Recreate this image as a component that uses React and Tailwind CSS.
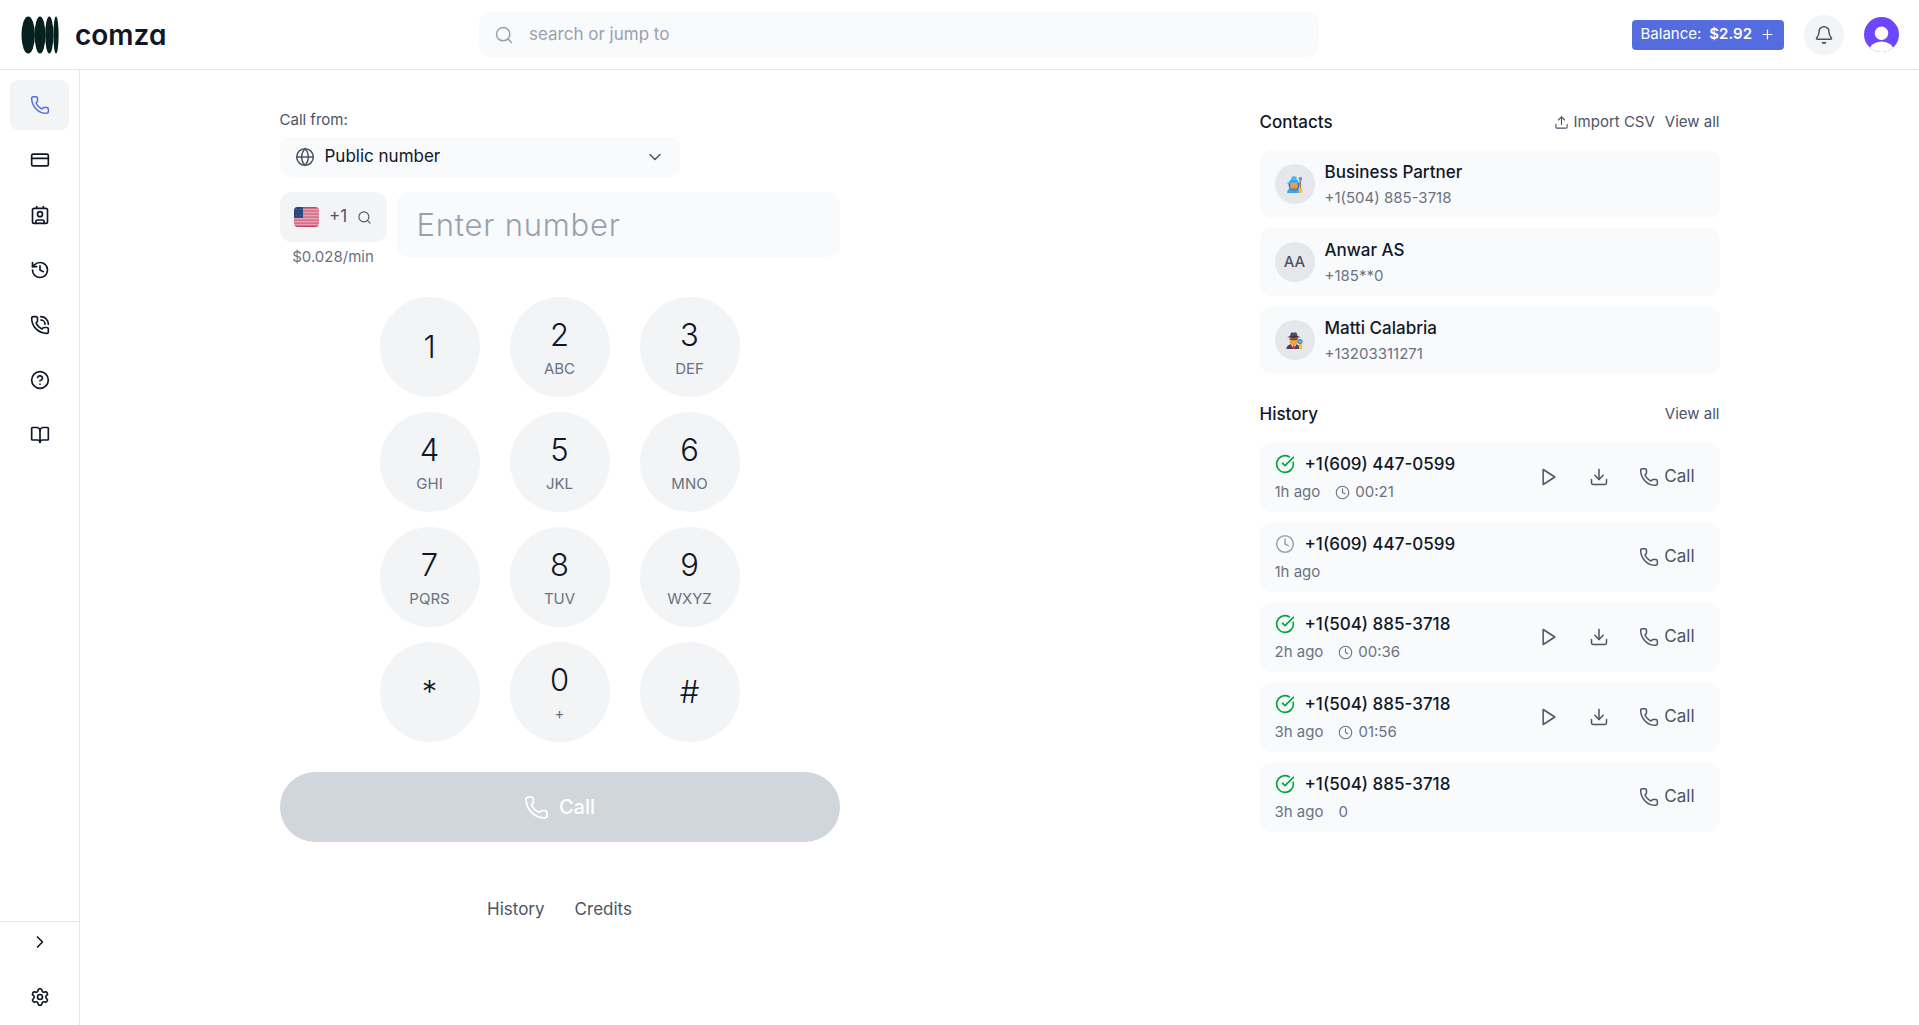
import React, { useState } from 'react';
import {
  Bell,
  BookOpen,
  ChevronDown,
  ChevronRight,
  CircleCheckBig,
  CircleHelp,
  Clock,
  Contact,
  CreditCard,
  Download,
  Globe,
  History,
  Phone,
  PhoneCall,
  Plus,
  Search,
  Settings,
  Upload,
} from 'lucide-react';

const menu = [
  { id: 'dialer', label: 'Dialer', icon: Phone },
  { id: 'credits', label: 'Credits', icon: CreditCard },
  { id: 'contacts', label: 'Contacts', icon: Contact },
  { id: 'history', label: 'History', icon: History },
  { id: 'numbers', label: 'Numbers', icon: PhoneCall },
  { id: 'help', label: 'Help', icon: CircleHelp },
  { id: 'docs', label: 'Docs', icon: BookOpen },
];

const keys = [
  { digit: '1' },
  { digit: '2', letters: 'ABC' },
  { digit: '3', letters: 'DEF' },
  { digit: '4', letters: 'GHI' },
  { digit: '5', letters: 'JKL' },
  { digit: '6', letters: 'MNO' },
  { digit: '7', letters: 'PQRS' },
  { digit: '8', letters: 'TUV' },
  { digit: '9', letters: 'WXYZ' },
  { digit: '*' },
  { digit: '0', letters: '+' },
  { digit: '#' },
];

const contacts = [
  { name: 'Business Partner', phone: '+1(504) 885-3718', avatar: <MageFace /> },
  { name: 'Anwar AS', phone: '+185**0', avatar: 'AA' },
  { name: 'Matti Calabria', phone: '+13203311271', avatar: <DetectiveFace /> },
];

const calls = [
  { id: 1, phone: '+1(609) 447-0599', ago: '1h ago', duration: '00:21', done: true },
  { id: 2, phone: '+1(609) 447-0599', ago: '1h ago', done: false },
  { id: 3, phone: '+1(504) 885-3718', ago: '2h ago', duration: '00:36', done: true },
  { id: 4, phone: '+1(504) 885-3718', ago: '3h ago', duration: '01:56', done: true },
  { id: 5, phone: '+1(504) 885-3718', ago: '3h ago', note: '0', done: true },
];

function LogoMark() {
  return (
    <svg width="40" height="40" viewBox="0 0 40 40" fill="#06201d" aria-hidden="true">
      <ellipse cx="8.2" cy="20" rx="6.7" ry="18.6" />
      <ellipse cx="20" cy="20" rx="5.4" ry="18.6" />
      <ellipse cx="29.3" cy="20" rx="4.1" ry="18.6" />
      <ellipse cx="36" cy="20" rx="2.6" ry="18.6" />
    </svg>
  );
}

function UserAvatar() {
  return (
    <svg width="35" height="35" viewBox="0 0 35 35" aria-hidden="true">
      <defs>
        <clipPath id="avatar-clip">
          <circle cx="17.5" cy="17.5" r="17.5" />
        </clipPath>
      </defs>
      <g clipPath="url(#avatar-clip)">
        <rect width="35" height="35" fill="#6c47ff" />
        <circle cx="17.5" cy="16.3" r="6.7" fill="#fff" />
        <ellipse cx="17.5" cy="34" rx="12.3" ry="9.5" fill="#fff" />
      </g>
    </svg>
  );
}

function UsFlag() {
  return (
    <svg width="25" height="20" viewBox="0 0 25 20" className="rounded" aria-hidden="true">
      <rect width="25" height="20" fill="#e2a3b4" />
      <g fill="#d5708b">
        <rect width="25" height="1.6" fill="#c94466" />
        <rect y="3.1" width="25" height="1.6" />
        <rect y="6.2" width="25" height="1.6" />
        <rect y="9.3" width="25" height="1.6" />
        <rect y="12.4" width="25" height="1.6" />
        <rect y="15.4" width="25" height="1.6" />
        <rect y="18.4" width="25" height="1.6" fill="#c94466" />
      </g>
      <rect width="9" height="10.9" fill="#29487c" />
      <g fill="#56719c">
        <circle cx="2.4" cy="2.6" r=".6" />
        <circle cx="6.4" cy="2.6" r=".6" />
        <circle cx="4.4" cy="5.4" r=".6" />
        <circle cx="2.4" cy="8.2" r=".6" />
        <circle cx="6.4" cy="8.2" r=".6" />
      </g>
    </svg>
  );
}

function MageFace() {
  return (
    <svg width="17" height="17" viewBox="0 0 17 17" aria-hidden="true">
      <path d="M1.200 17c0-3.500 2-5.500 6.800-5.500s6.300 2 6.300 5.500z" fill="#3ba2f5" />
      <path d="M2.500 6C2.300 11.500 3.300 14.500 8 14.500s6-3 5.500-8.500z" fill="#1f7be0" />
      <circle cx="8" cy="9.400" r="3.900" fill="#e9a23b" />
      <path d="M6 11.200c.6.900 3.400.9 4 0-.4 1.900-3.600 1.900-4 0z" fill="#a85f2c" />
      <path d="M.3 7.400C3 6.400 4.500 4.500 5.600 1.600 6 .5 7.500-.2 9.500.4c1.500.4 1.300 1.500.8 1.800.7 2.300 1.700 3.700 3.700 4.600-3 .6-5 0-6.500 0S3 8 .3 7.400z" fill="#4db5f5" />
      <path d="M4.700 4.300c1.800.8 4.700.8 6.500 0l.5 1c-2.200 1-5.300 1-7.500 0z" fill="#2b8de8" />
      <rect x="13.700" y="3.500" width="1.400" height="13.500" rx=".7" fill="#bd7350" />
      <circle cx="14.400" cy="2.800" r="1.800" fill="#38a3f2" />
      <path d="M12.600 13.200c0-.9 3.600-.9 3.600 0V17h-3.600z" fill="#f7c331" />
    </svg>
  );
}

function DetectiveFace() {
  return (
    <svg width="17" height="17" viewBox="0 0 17 17" aria-hidden="true">
      <path d="M.5 17c0-3.500 2.500-5 7-5s7 1.500 7 5z" fill="#4b4163" />
      <path d="M3.500 6h8.500v2.800c0 2.700-1.800 4.700-4.200 4.700S3.500 11.500 3.500 8.800z" fill="#f2a13a" />
      <path d="M3.600 6.200h8.300v1.400c-2 .9-6.300.9-8.300 0z" fill="#7a4a2b" />
      <path d="M5 12.300 7.700 17l2.700-4.700-2.700 1.200z" fill="#fff" />
      <path d="m7 13.600.7-.5.8.5L9 17H6.500z" fill="#d6304a" />
      <path d="M4.200 3.800C4.400 1.500 5 .3 6 .3c.7 0 1.100.5 1.800.5s1-.5 1.800-.5c1 0 1.600 1.200 1.800 3.500l2.600 1.300c0 1.300-12.500 1.300-12.500 0z" fill="#544a6e" />
      <path d="M4.100 3.700c2 .8 5.300.8 7.400 0l.1 1c-2.200.9-5.400.9-7.600 0z" fill="#332b45" />
      <circle cx="14" cy="9.600" r="2.100" fill="#57c0f5" stroke="#2f6d9e" strokeWidth=".9" />
      <path d="M12.600 13c.4-1.500 3.400-1.500 3.600 0L16 17h-3z" fill="#f6bd32" />
    </svg>
  );
}

function PlayIcon() {
  return (
    <svg
      width="20"
      height="20"
      viewBox="0 0 24 24"
      fill="none"
      stroke="currentColor"
      strokeWidth="1.8"
      strokeLinejoin="round"
      aria-hidden="true"
    >
      <path d="M5 3l14 9-14 9z" />
    </svg>
  );
}

function Header() {
  return (
    <header className="flex h-[70px] flex-shrink-0 items-center justify-between gap-5 border-b border-gray-200 px-5">
      <a href="#home" className="flex items-center gap-[15px]">
        <LogoMark />
        <span className="text-[28px] leading-9 font-semibold text-gray-900 [font-feature-settings:'cv11']">comza</span>
      </a>

      <label className="flex h-[45px] w-full max-w-[840px] items-center gap-[15px] rounded-xl bg-gray-50 px-[15px] text-gray-400">
        <Search size={20} strokeWidth={1.8} />
        <input
          type="search"
          aria-label="Search"
          placeholder="search or jump to"
          className="min-w-0 flex-1 bg-transparent text-[17px] text-gray-900 outline-none placeholder:text-gray-400"
        />
      </label>

      <div className="flex items-center gap-5">
        <button className="flex h-[30px] items-center gap-2 rounded bg-[#546ce0] px-[9px] text-[15px] whitespace-nowrap text-white">
          <span>Balance:</span>
          <span className="font-semibold">$2.92</span>
          <Plus size={15} strokeWidth={1.8} />
        </button>
        <button aria-label="Notifications" className="flex size-10 items-center justify-center rounded-full bg-gray-100 text-gray-600">
          <Bell size={20} strokeWidth={1.8} />
        </button>
        <button aria-label="Account" className="rounded-full">
          <UserAvatar />
        </button>
      </div>
    </header>
  );
}

function Sidebar({ active, setActive }) {
  const getBtnClass = (id) =>
    `flex h-[50px] items-center justify-center rounded-lg ${
      active === id ? 'bg-gray-100 text-[#546ce0]' : 'text-gray-900'
    }`;

  return (
    <aside className="flex w-20 flex-shrink-0 flex-col justify-between border-r border-gray-200">
      <nav className="flex flex-col gap-[5px] p-2.5">
        {menu.map(({ id, label, icon: Icon }) => (
          <button key={id} aria-label={label} onClick={() => setActive(id)} className={getBtnClass(id)}>
            <Icon size={20} strokeWidth={active === id ? 1.8 : 2} />
          </button>
        ))}
      </nav>
      <div className="flex flex-col gap-2.5 border-t border-gray-200 px-2.5 pb-[3px]">
        <button aria-label="Expand menu" className="flex h-10 items-center justify-center text-gray-900">
          <ChevronRight size={20} />
        </button>
        <button aria-label="Settings" className="flex h-[50px] items-center justify-center rounded-lg text-gray-900">
          <Settings size={20} />
        </button>
      </div>
    </aside>
  );
}

function Dialer() {
  const [number, setNumber] = useState('');

  return (
    <section className="w-full max-w-[560px]">
      <label htmlFor="call-from" className="mb-[7px] block text-[15px] leading-5 text-gray-600">
        Call from:
      </label>
      <div className="relative w-full max-w-[400px]">
        <Globe size={20} strokeWidth={1.8} className="pointer-events-none absolute top-2.5 left-[15px] text-gray-600" />
        <select
          id="call-from"
          className="h-10 w-full appearance-none rounded-xl bg-gray-50 pr-10 pl-[45px] text-[17px] text-gray-900 outline-none"
        >
          <option>Public number</option>
        </select>
        <ChevronDown size={20} strokeWidth={1.8} className="pointer-events-none absolute top-2.5 right-[15px] text-gray-600" />
      </div>

      <div className="mt-[15px] flex items-start gap-2.5">
        <div className="flex w-[107px] flex-shrink-0 flex-col gap-[5px]">
          <button aria-label="Choose country" className="flex h-[50px] items-center justify-center gap-2.5 rounded-xl bg-gray-100 text-gray-600">
            <UsFlag />
            <span className="text-[17px]">+1</span>
            <Search size={15} strokeWidth={1.8} />
          </button>
          <span className="text-center text-[15px] leading-5 text-gray-500">$0.028/min</span>
        </div>
        <input
          type="tel"
          aria-label="Phone number"
          placeholder="Enter number"
          value={number}
          onChange={(e) => setNumber(e.target.value)}
          className="h-[65px] min-w-0 flex-1 rounded-xl bg-gray-50 px-5 text-[31px] font-light tracking-wide text-gray-900 outline-none placeholder:text-gray-400"
        />
      </div>

      <div className="mx-auto mt-[30px] grid w-fit grid-cols-3 gap-x-[30px] gap-y-[15px]">
        {keys.map(({ digit, letters }) => (
          <button
            key={digit}
            onClick={() => setNumber(number + digit)}
            className="flex size-[100px] flex-col items-center justify-center rounded-full bg-gray-100"
          >
            <span className="text-[31px] leading-11 font-light text-gray-900">{digit}</span>
            {letters && <span className="text-[15px] leading-6 text-gray-500">{letters}</span>}
          </button>
        ))}
      </div>

      <button
        disabled
        className="mt-[30px] flex h-[70px] w-full items-center justify-center gap-2.5 rounded-full bg-gray-300 text-xl font-medium text-white"
      >
        <Phone size={25} strokeWidth={1.8} />
        Call
      </button>

      <div className="mt-[55px] flex justify-center gap-[30px] text-[17px] leading-6 text-gray-600">
        <a href="#history">History</a>
        <a href="#credits">Credits</a>
      </div>
    </section>
  );
}

function Contacts() {
  return (
    <section>
      <div className="mb-4 flex items-center justify-between">
        <h2 className="text-[17px] leading-6 font-medium text-gray-900">Contacts</h2>
        <div className="flex items-center gap-2.5 text-[15px] leading-6 text-gray-600">
          <button className="flex items-center gap-[5px]">
            <Upload size={15} strokeWidth={1.8} />
            Import CSV
          </button>
          <a href="#contacts">View all</a>
        </div>
      </div>
      <ul className="flex flex-col gap-2.5">
        {contacts.map(({ name, phone, avatar }) => (
          <li key={name} className="flex items-center gap-2.5 rounded-xl bg-gray-50 px-[15px] py-2">
            <div className="flex size-10 items-center justify-center rounded-full bg-gray-200 text-[15px] font-medium text-gray-600">
              {avatar}
            </div>
            <div>
              <p className="text-[17px] leading-7 font-medium text-gray-900">{name}</p>
              <p className="text-[15px] leading-6 text-gray-500">{phone}</p>
            </div>
          </li>
        ))}
      </ul>
    </section>
  );
}

function CallHistory() {
  return (
    <section>
      <div className="mb-4 flex items-center justify-between">
        <h2 className="text-[17px] leading-6 font-medium text-gray-900">History</h2>
        <a href="#history" className="text-[15px] leading-6 text-gray-600">View all</a>
      </div>
      <ul className="flex flex-col gap-2.5">
        {calls.map(({ id, phone, ago, duration, note, done }) => (
          <li key={id} className="flex items-center justify-between rounded-xl bg-gray-50 px-[15px] py-[7px]">
            <div>
              <div className="flex items-center gap-2.5">
                {done ? (
                  <CircleCheckBig size={20} className="text-green-600" />
                ) : (
                  <Clock size={20} strokeWidth={1.8} className="text-gray-400" />
                )}
                <span className="text-[17px] leading-[30px] font-medium text-gray-900">{phone}</span>
              </div>
              <div className="flex items-center gap-[15px] text-[15px] leading-[26px] text-gray-500">
                <span>{ago}</span>
                {duration && (
                  <span className="flex items-center gap-[5px]">
                    <Clock size={15} strokeWidth={1.8} />
                    {duration}
                  </span>
                )}
                {note && <span>{note}</span>}
              </div>
            </div>
            <div className="flex items-center gap-2.5 text-gray-600">
              {duration && (
                <>
                  <button aria-label="Play recording" className="flex size-10 items-center justify-center">
                    <PlayIcon />
                  </button>
                  <button aria-label="Download recording" className="flex size-10 items-center justify-center">
                    <Download size={20} strokeWidth={1.8} />
                  </button>
                </>
              )}
              <button className="flex h-10 items-center gap-[5px] px-2.5 text-[17px]">
                <Phone size={20} strokeWidth={1.8} />
                Call
              </button>
            </div>
          </li>
        ))}
      </ul>
    </section>
  );
}

export default function App() {
  const [active, setActive] = useState('dialer');

  return (
    <div className="flex min-h-screen flex-col bg-white font-['Inter','Liberation_Sans',sans-serif]">
      <Header />
      <div className="flex flex-1">
        <Sidebar active={active} setActive={setActive} />
        <main className="flex-1 px-5 pt-10">
          <div className="mx-auto flex max-w-[1440px] justify-between gap-10">
            <Dialer />
            <div className="flex w-full max-w-[460px] flex-col gap-7">
              <Contacts />
              <CallHistory />
            </div>
          </div>
        </main>
      </div>
    </div>
  );
}
